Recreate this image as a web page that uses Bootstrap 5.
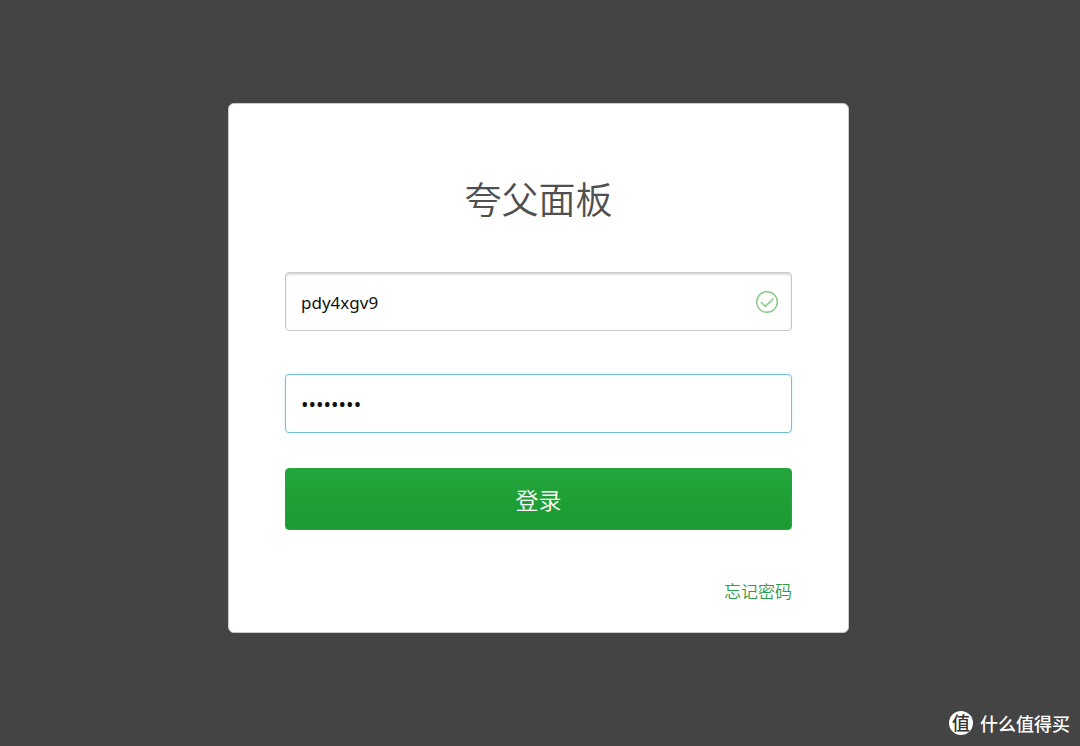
<!DOCTYPE html>
<html lang="zh-CN">
<head>
<meta charset="utf-8">
<meta name="viewport" content="width=device-width, initial-scale=1">
<title>夸父面板</title>
<link href="https://cdn.jsdelivr.net/npm/bootstrap@5.3.0/dist/css/bootstrap.min.css" rel="stylesheet">
<style>
  body { background: #444; color: #505050; font-family: "Noto Sans", "Noto Sans CJK SC", sans-serif; }
  .page { padding: 103px 3px 0 0; }
  .login-card { max-width: 621px; padding: 70px 56px 27px; border: 1px solid #ccc; border-radius: 6px; }
  .login-title { font-family: "Noto Sans CJK SC", sans-serif; font-weight: 350; font-size: 37px; line-height: 48px; margin-bottom: 50px; }
  .user-field { margin-bottom: 43px; }
  .login-input { height: 59px; padding: 2px 15px 0; border: 1px solid #c8c8c8; border-radius: 4px; font-size: 17px; color: #111; box-shadow: inset 0 2px 2px #ddd; }
  .login-pass, .login-pass:focus { margin-bottom: 35px; border-color: #73bfd4; color: #111; font-size: 20px; box-shadow: 0 0 4px #dff3f9; }
  .valid-icon { right: 13px; top: 18px; }
  .login-btn, .login-btn:hover { height: 62px; margin-bottom: 48px; border: 1px solid #25a23c; border-radius: 4px; background: linear-gradient(#22a63b, #1c9a33); color: #fff; font-family: "Noto Sans CJK SC", sans-serif; font-weight: 350; font-size: 23px; }
  .forgot-row { line-height: 25px; }
  .forgot { color: #2b9c4b; font-family: "Noto Sans CJK SC", sans-serif; font-weight: 350; font-size: 17px; }
  .site-mark { right: 10px; bottom: 11px; gap: 7px; color: #fff; font-family: "Noto Sans CJK SC", sans-serif; font-size: 18px; font-weight: 500; line-height: 24px; }
  .site-logo { width: 24px; height: 24px; color: #333; font-size: 18px; font-style: oblique 6deg; line-height: 23px; }
</style>
</head>
<body class="min-vh-100 position-relative">
<main class="page">
  <form class="login-card bg-white mx-auto" onsubmit="return false">
    <h1 class="login-title text-center">夸父面板</h1>
    <div class="user-field position-relative">
      <input class="form-control login-input" type="text" value="pdy4xgv9" aria-label="用户名" autocomplete="off" spellcheck="false">
      <svg class="valid-icon position-absolute" width="24" height="24" viewBox="0 0 24 24" fill="none" stroke="#8ccb8c" stroke-width="1.5" aria-hidden="true">
        <circle cx="12" cy="12" r="10.3"/><path d="M5.8 12l4.6 4.4L18.4 8.6"/>
      </svg>
    </div>
    <input class="form-control login-input login-pass" type="password" value="12345678" aria-label="密码" autocomplete="off">
    <button class="btn login-btn w-100 d-flex align-items-center justify-content-center" type="submit">登录</button>
    <div class="forgot-row text-end"><a class="forgot text-decoration-none" href="#">忘记密码</a></div>
  </form>
</main>
<div class="site-mark position-absolute d-flex align-items-center">
  <span class="site-logo bg-white rounded-circle text-center">值</span>
  <span>什么值得买</span>
</div>
<script src="https://cdn.jsdelivr.net/npm/bootstrap@5.3.0/dist/js/bootstrap.bundle.min.js"></script>
</body>
</html>
